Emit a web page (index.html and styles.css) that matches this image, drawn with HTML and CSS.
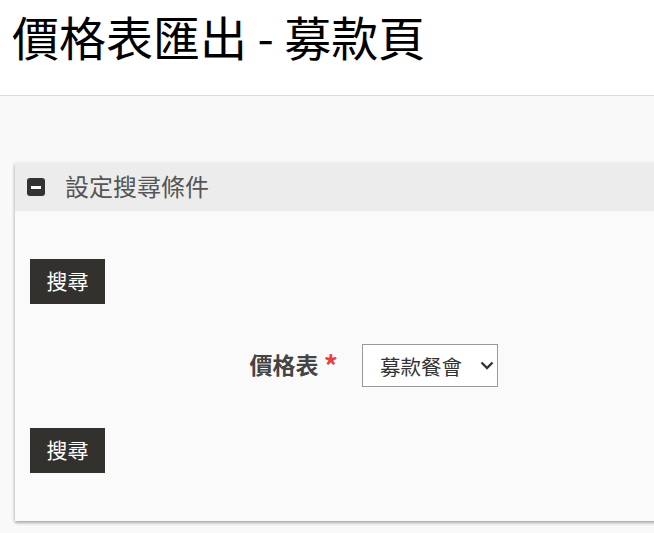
FILE: index.html
```html
<!DOCTYPE html>
<html lang="zh-Hant">
<head>
<meta charset="utf-8">
<link rel="stylesheet" href="styles.css">
</head>
<body>
<header class="page-header">
  <h1 class="page-title">價格表匯出 - 募款頁</h1>
</header>
<main class="page-main">
  <section class="panel">
    <div class="panel-head">
      <span class="toggle-icon"><span class="toggle-bar"></span></span>
      <span class="panel-title">設定搜尋條件</span>
    </div>
    <div class="panel-body">
      <div class="btn-row"><button class="btn">搜尋</button></div>
      <div class="form-row">
        <label class="form-label">價格表 <span class="req">*</span></label>
        <div class="select-wrap">
          <select class="select">
            <option>募款餐會</option>
          </select>
          <svg class="chev" width="14" height="9" viewBox="0 0 14 9"><polyline points="1.5,1.5 7,7 12.5,1.5" fill="none" stroke="#333" stroke-width="2.4"/></svg>
        </div>
      </div>
      <div class="btn-row"><button class="btn">搜尋</button></div>
    </div>
  </section>
</main>
</body>
</html>
```
FILE: styles.css
```css
html, body {
  margin: 0;
  padding: 0;
}
body {
  background: #f9f9f9;
  font-family: "Noto Sans CJK TC", "Noto Sans", sans-serif;
  overflow: hidden;
  height: 533px;
}
.page-header {
  background: #fff;
  height: 96px;
  border-bottom: 1px solid #dddddd;
  box-sizing: border-box;
}
.page-title {
  margin: 0;
  padding: 8px 0 0 12px;
  font-size: 47px;
  line-height: 56px;
  font-weight: 400;
  color: #000;
}
.page-main {
  padding: 67px 0 0 15px;
}
.panel {
  width: 700px;
  background: #fafafa;
  box-shadow: 0 2px 3px rgba(0,0,0,0.3), -1px 0 4px rgba(0,0,0,0.08);
}
.panel-head {
  height: 48px;
  background: #ececec;
  display: flex;
  align-items: center;
  padding-left: 12px;
  gap: 20px;
}
.toggle-icon {
  width: 18px;
  height: 18px;
  background: #333;
  border-radius: 3px;
  display: flex;
  align-items: center;
  justify-content: center;
}
.toggle-bar {
  width: 10px;
  height: 3px;
  background: #fff;
}
.panel-title {
  font-size: 24px;
  color: #555;
  line-height: 48px;
  padding-bottom: 2px;
}
.panel-body {
  padding: 48px 15px 48px 15px;
}
.btn {
  background: #33312e;
  color: #fff;
  border: 0;
  border-radius: 0;
  width: 75px;
  height: 45px;
  font-family: inherit;
  font-size: 21px;
  line-height: 1;
  padding: 0 0 3px;
  display: block;
}
.form-row {
  display: grid;
  grid-template-columns: 320px auto;
  align-items: center;
  column-gap: 12px;
  margin: 40px 0 41px;
}
.form-label {
  text-align: right;
  font-size: 23px;
  line-height: 30px;
  font-weight: 700;
  color: #444;
  padding-right: 12px;
  padding-bottom: 4px;
}
.req {
  color: #e94040;
  font-size: 28px;
  line-height: 0;
  vertical-align: -3px;
}
.select-wrap {
  position: relative;
  width: 136px;
  height: 43px;
}
.select {
  appearance: none;
  -webkit-appearance: none;
  width: 136px;
  height: 43px;
  border: 1px solid #999;
  border-radius: 0;
  background: #fff;
  font-family: inherit;
  font-size: 20.5px;
  color: #333;
  padding: 0 0 0 17px;
  margin: 0;
}
.chev {
  position: absolute;
  right: 4px;
  top: 17px;
  pointer-events: none;
}
```
